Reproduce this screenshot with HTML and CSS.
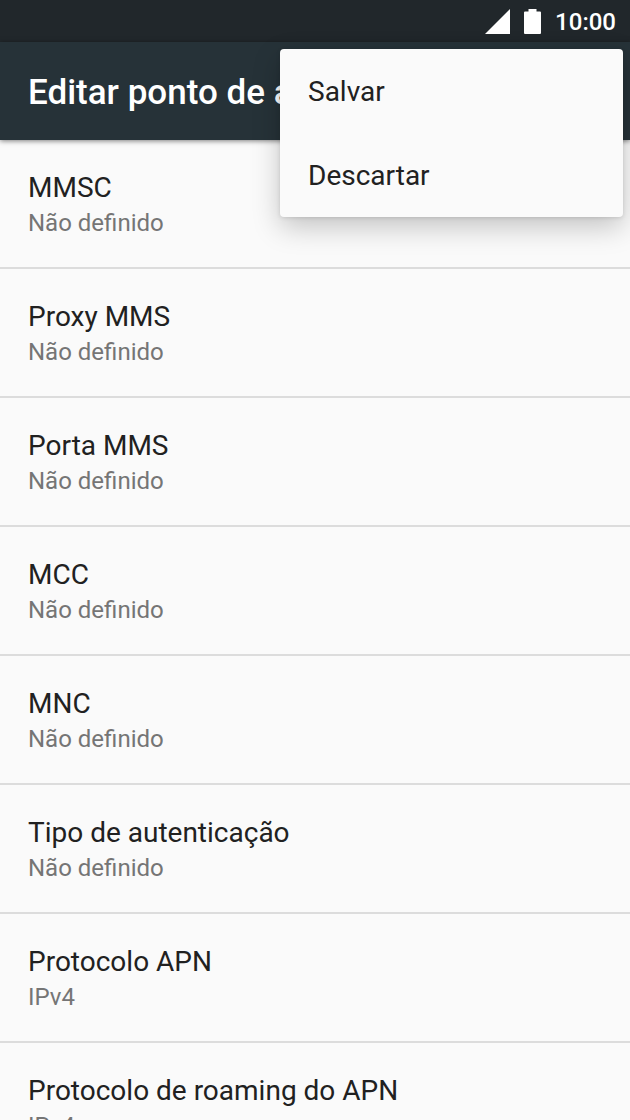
FILE: index.html
```html
<!DOCTYPE html>
<html lang="pt-BR">
<head>
<meta charset="utf-8">
<meta name="viewport" content="width=device-width, initial-scale=1">
<title>Editar ponto de acesso</title>
<link rel="stylesheet" href="styles.css">
</head>
<body>
<div class="screen">
  <div class="status-bar">
    <svg class="signal-icon" viewBox="0 0 25 25" aria-hidden="true"><path d="M0 25 25 0v25z"/></svg>
    <svg class="battery-icon" viewBox="0 0 17 25" aria-hidden="true"><path d="M4.500 0h8v2.500H16q1 0 1 1V24q0 1-1 1H1q-1 0-1-1V3.500q0-1 1-1h3.500z"/></svg>
    <time class="clock">10:00</time>
  </div>
  <header class="app-bar">
    <h1 class="title">Editar ponto de a</h1>
    <div class="menu" role="menu">
      <button class="menu-item" type="button" role="menuitem">Salvar</button>
      <button class="menu-item" type="button" role="menuitem">Descartar</button>
    </div>
  </header>
  <main class="settings">
    <button class="setting" type="button"><span class="name">MMSC</span><span class="value">Não definido</span></button>
    <button class="setting" type="button"><span class="name">Proxy MMS</span><span class="value">Não definido</span></button>
    <button class="setting" type="button"><span class="name">Porta MMS</span><span class="value">Não definido</span></button>
    <button class="setting" type="button"><span class="name">MCC</span><span class="value">Não definido</span></button>
    <button class="setting" type="button"><span class="name">MNC</span><span class="value">Não definido</span></button>
    <button class="setting" type="button"><span class="name">Tipo de autenticação</span><span class="value">Não definido</span></button>
    <button class="setting" type="button"><span class="name">Protocolo APN</span><span class="value">IPv4</span></button>
    <button class="setting" type="button"><span class="name">Protocolo de roaming do APN</span><span class="value">IPv4</span></button>
  </main>
</div>
</body>
</html>
```

FILE: styles.css
```css
* {
  box-sizing: border-box;
}

body {
  margin: 0;
  background: #fafafa;
  color: #212121;
  font-family: Roboto, "Noto Sans", sans-serif;
}

button {
  border: 0;
  background: none;
  color: inherit;
  font: inherit;
  text-align: left;
}

.screen {
  display: flex;
  flex-direction: column;
  height: 100vh;
  overflow: hidden;
}

.status-bar {
  display: flex;
  flex: none;
  align-items: flex-end;
  justify-content: flex-end;
  height: 42px;
  padding: 0 14px 6px 0;
  background: #21272b;
  color: #fff;
}

.signal-icon,
.battery-icon {
  height: 25px;
  margin: 0 14px 2px 0;
  fill: #fff;
}

.signal-icon {
  width: 25px;
}

.battery-icon {
  width: 17px;
}

.clock {
  font-size: 24px;
  font-weight: 500;
  line-height: 28px;
}

.app-bar {
  position: relative;
  z-index: 1;
  display: flex;
  flex: none;
  align-items: center;
  height: 98px;
  padding: 4px 28px 0;
  background: #263238;
  color: #fff;
  box-shadow: 0 1px 5px rgba(0, 0, 0, 0.5);
}

.title {
  margin: 0;
  font-size: 35px;
  font-weight: 500;
  line-height: 42px;
  white-space: nowrap;
}

.menu {
  position: absolute;
  top: 7px;
  right: 7px;
  display: flex;
  flex-direction: column;
  width: 343px;
  border-radius: 4px;
  background: #fafafa;
  color: #212121;
  box-shadow: 0 10px 28px rgba(0, 0, 0, 0.22), 0 1px 4px rgba(0, 0, 0, 0.12);
}

.menu-item {
  height: 84px;
  padding: 2px 28px 0;
  font-size: 28px;
  line-height: 36px;
}

.settings {
  display: flex;
  flex-direction: column;
}

.setting {
  display: flex;
  flex: none;
  flex-direction: column;
  padding: 30px 28px 26px;
  border-bottom: 2px solid #dcdcdc;
}

.name {
  font-size: 28px;
  line-height: 36px;
}

.value {
  color: #757575;
  font-size: 24px;
  line-height: 35px;
}
```
